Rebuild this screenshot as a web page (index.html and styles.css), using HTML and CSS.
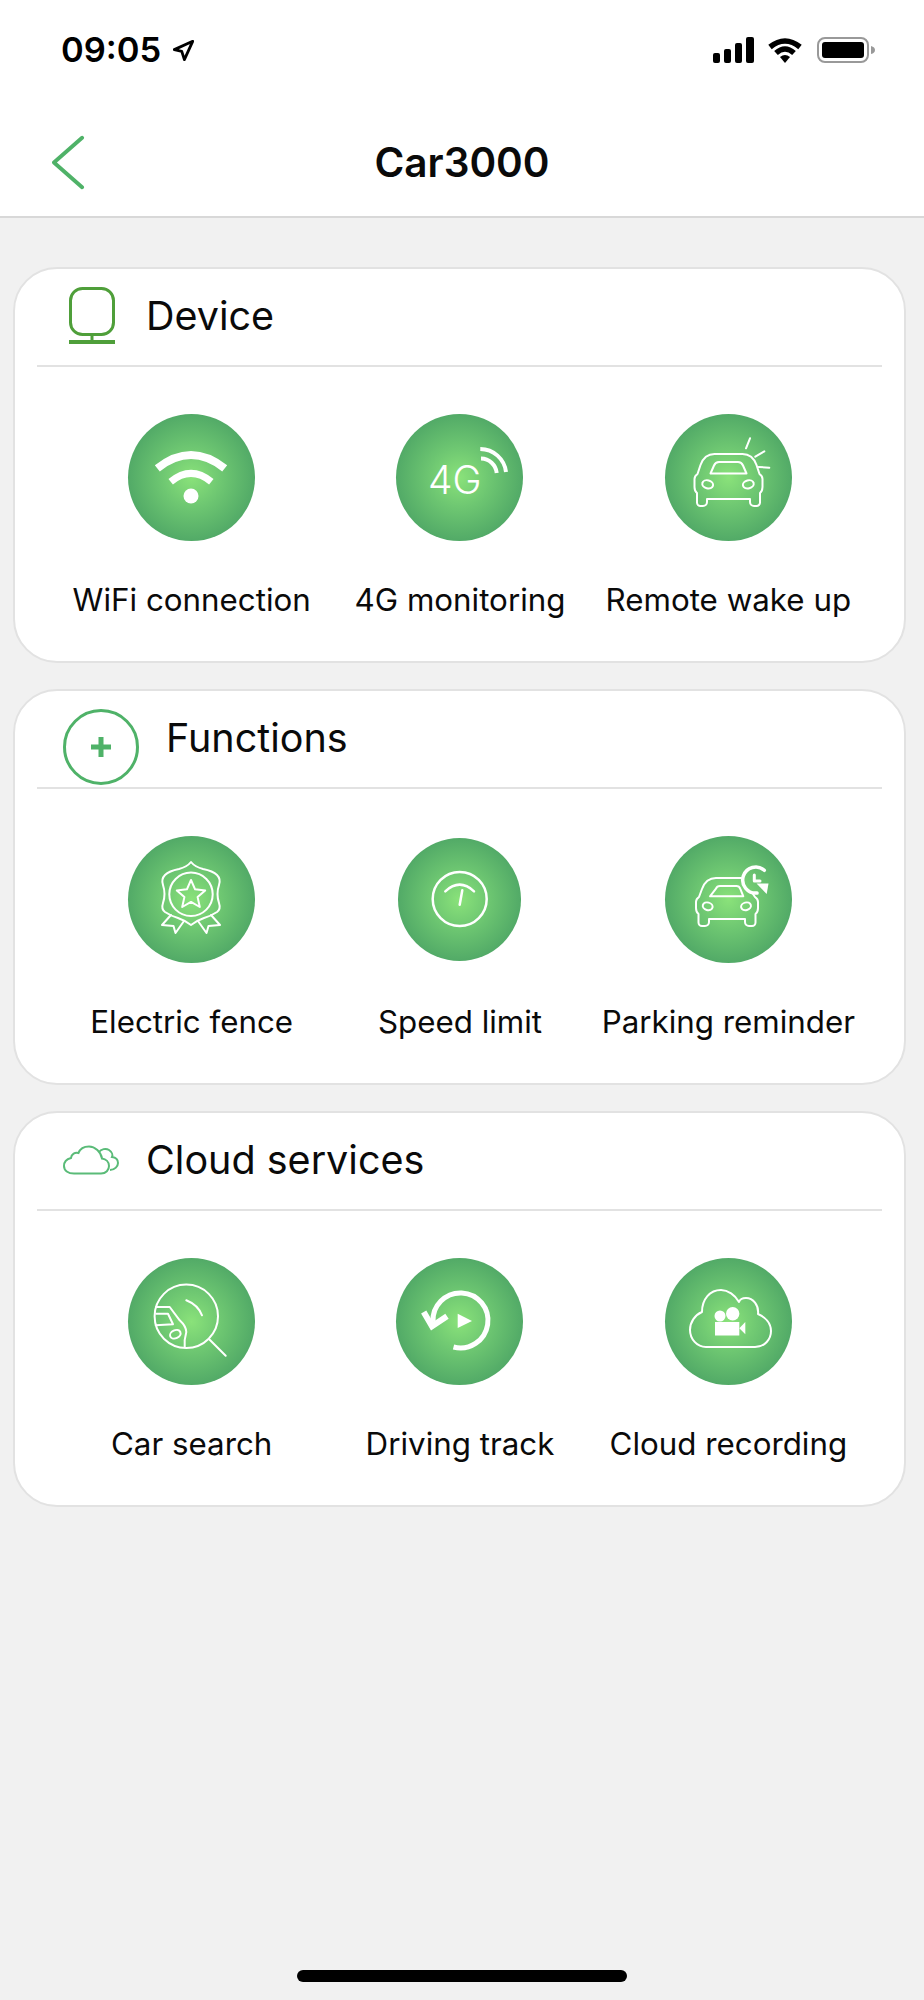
FILE: index.html
```html
<!DOCTYPE html>
<html lang="en">
<head>
<meta charset="utf-8">
<title>Car3000</title>
<link rel="stylesheet" href="styles.css">
</head>
<body>
<div class="page">
  <header class="top">
    <div class="status">
      <div class="status-left">
        <span class="time">09:05</span>
        <svg class="loc" viewBox="0 0 24 24"><path d="M22.5 1.5L1.5 11L10 13L13 22.5Z"/></svg>
      </div>
      <div class="status-right">
        <svg class="signal" viewBox="0 0 41 26"><rect x="0" y="16" width="7" height="10" rx="2"/><rect x="11" y="12" width="7" height="14" rx="2"/><rect x="22" y="6" width="7" height="20" rx="2"/><rect x="33" y="0" width="8" height="26" rx="2"/></svg>
        <svg class="wifi" viewBox="0 0 36 26"><path class="wifi-arc" d="M3 10Q18 -2 33 10"/><path class="wifi-arc" d="M9 16Q18 8 27 16"/><path class="wifi-dot" d="M13 20Q18 16 23 20L18 26Z"/></svg>
        <svg class="battery" viewBox="0 0 58 26"><rect class="batt-shell" x="1" y="1" width="50" height="24" rx="7"/><rect x="5" y="5" width="42" height="16" rx="3"/><path class="batt-nub" d="M54 9Q58 10 58 13Q58 16 54 17Z"/></svg>
      </div>
    </div>
    <nav class="nav">
      <svg class="back" viewBox="0 0 34 55"><path d="M31 2L2 27.5L31 53"/></svg>
      <h1 class="title">Car3000</h1>
    </nav>
  </header>

  <main class="cards">
    <section class="card">
      <div class="card-head head-device">
        <svg class="head-icon icon-device" viewBox="0 0 46 57"><rect x="1.5" y="1.5" width="43" height="46" rx="12"/><path d="M23 47.5V54"/><path class="device-base" d="M0 55H46"/></svg>
        <h2 class="card-title">Device</h2>
      </div>
      <div class="items">
        <div class="item">
          <div class="disc-slot"><div class="disc"><svg class="glyph" viewBox="0 0 127 127"><path class="g-8" d="M29.3 54.3Q63 27.7 96.7 54.3"/><path class="g-7" d="M42.7 67.7Q63 51 83.3 67.7"/><circle class="g-fill" cx="63" cy="82" r="7.5"/></svg></div></div>
          <p class="label">WiFi connection</p>
        </div>
        <div class="item">
          <div class="disc-slot"><div class="disc"><svg class="glyph" viewBox="0 0 127 127"><text class="g-text" x="32" y="80">4G</text><path class="g-4" d="M84.3 35A26 26 0 0 1 110 58"/><path class="g-4" d="M85 44.5A16 16 0 0 1 100.7 59"/></svg></div></div>
          <p class="label">4G monitoring</p>
        </div>
        <div class="item">
          <div class="disc-slot"><div class="disc"><svg class="glyph" viewBox="0 0 127 127">
            <path d="M42 85v3a4 4 0 0 1-4 4h-2.500a3.500 3.500 0 0 1-3.500-3.500v-9.500q-2.500-2-2.500-6v-8q0-3 3-5l3-9q4-11 14-11h28q10 0 14 11l3 9q3 2 3 5v8q0 4-2.500 6v9.500a3.500 3.500 0 0 1-3.500 3.500h-2.500a4 4 0 0 1-4-4v-3z"/>
            <path d="M45.500 59.500h36l-3.500-8q-1.500-3.500-5-3.500h-19q-3.500 0-5 3.500z"/>
            <ellipse cx="42.700" cy="70.300" rx="5.500" ry="4" transform="rotate(15 42.700 70.300)"/>
            <ellipse cx="83.300" cy="70.300" rx="5.500" ry="4" transform="rotate(-15 83.300 70.300)"/>
            <path d="M81 34.300L85 24.300M90.300 42.700L99.300 37.300M93.700 53L104.300 53.700"/>
          </svg></div></div>
          <p class="label">Remote wake up</p>
        </div>
      </div>
    </section>

    <section class="card">
      <div class="card-head head-functions">
        <svg class="head-icon icon-functions" viewBox="0 0 76 76"><circle cx="38" cy="38" r="36.500"/><path class="plus" d="M28 38H48M38 28V48"/></svg>
        <h2 class="card-title">Functions</h2>
      </div>
      <div class="items">
        <div class="item">
          <div class="disc-slot"><div class="disc"><svg class="glyph" viewBox="0 0 127 127">
            <path d="M63 26Q67 31 75 33Q85 35 89 39Q93 43 91 49Q88 58 91 67Q93 73 89 76Q83 80 76 82Q70 84 63 89Q56 84 50 82Q43 80 37 76Q33 73 35 67Q38 58 35 49Q33 43 37 39Q41 35 51 33Q59 31 63 26Z"/>
            <circle cx="63" cy="58.300" r="21.700"/>
            <path d="M63 44L67.100 53.300L77.200 54.400L69.600 61.100L71.800 71L63 65.900L54.200 71L56.400 61.100L48.800 54.400L58.900 53.300Z"/>
            <path d="M43 79L34 89L45.500 90L47.500 97L56 85M83 79L92 89L80.500 90L78.500 97L70 85"/>
          </svg></div></div>
          <p class="label">Electric fence</p>
        </div>
        <div class="item">
          <div class="disc-slot"><div class="disc disc-small"><svg class="glyph" viewBox="0 0 123 123">
            <circle class="g-25" cx="61.700" cy="61" r="27"/>
            <path class="g-25" d="M47.300 53.300Q61.700 40 76 53.300"/>
            <path class="g-25" d="M64.300 52.300L61.700 66.700"/>
          </svg></div></div>
          <p class="label">Speed limit</p>
        </div>
        <div class="item">
          <div class="disc-slot"><div class="disc"><svg class="glyph" viewBox="0 0 127 127">
            <path d="M76 42H51q-10 0-14 11l-3 8q-3 2-3 5v6q0 4 2.500 6v8.500a3.500 3.500 0 0 0 3.500 3.500h3a4 4 0 0 0 4-4v-3H80v3a4 4 0 0 0 4 4h3a3.500 3.500 0 0 0 3.500-3.500V78q2.500-2 2.500-6v-6q0-3-3-5l-2-3"/>
            <path d="M45 60.300H78.300l-3-7.500q-1-2.800-4-2.800H55q-3 0-4.200 2.800z"/>
            <ellipse cx="42.700" cy="70.300" rx="5" ry="3.800" transform="rotate(15 42.700 70.300)"/>
            <ellipse cx="81" cy="70.300" rx="5" ry="3.800" transform="rotate(-15 81 70.300)"/>
            <path class="g-35" d="M99.300 34.300A13 13 0 1 0 92 57"/>
            <path class="g-3" d="M89.300 39V45H95"/>
            <path class="g-solid" d="M91.500 47.500L103.500 47.500L101.700 58Z"/>
          </svg></div></div>
          <p class="label">Parking reminder</p>
        </div>
      </div>
    </section>

    <section class="card">
      <div class="card-head head-cloud">
        <svg class="head-icon icon-cloud" viewBox="0 0 56 30"><path d="M11 28.500H38C43 28.500 46 25 46 21C46 17 43 14 39 13.500C38 7 32 1.500 26 1.500C21 1.500 17 4 15.500 8C12 7 8.500 9 8 13C4 14 1 17 1 21C1 25.500 5 28.500 11 28.500Z"/><path d="M36 7C38 4 43 3 46 5C49 7 50 10 49 12C53 12.500 55 15 55 18C55 21 52 25 47 25"/></svg>
        <h2 class="card-title">Cloud services</h2>
      </div>
      <div class="items">
        <div class="item">
          <div class="disc-slot"><div class="disc"><svg class="glyph" viewBox="0 0 127 127">
            <circle cx="58.300" cy="58.300" r="31.700"/>
            <path d="M81.700 81.700L97.700 97.700M58.300 42.300Q70 47 74 57.300"/>
            <path d="M28 49H41.700L51.700 62.300Q58 68 58.300 74Q56 82 56.700 89"/>
            <path d="M28.300 55.700H40L45 66.300L27.700 67.300"/>
            <ellipse cx="47.300" cy="76.300" rx="5.500" ry="4" transform="rotate(-25 47.300 76.300)"/>
          </svg></div></div>
          <p class="label">Car search</p>
        </div>
        <div class="item">
          <div class="disc-slot"><div class="disc"><svg class="glyph" viewBox="0 0 127 127">
            <path class="g-5" d="M57.500 89A27.500 27.500 0 1 0 37 64"/>
            <path class="g-6" d="M27.700 54L36 68.300L51 58.300"/>
            <path class="g-solid" d="M61.700 55.700L76 63L61.700 70Z"/>
          </svg></div></div>
          <p class="label">Driving track</p>
        </div>
        <div class="item">
          <div class="disc-slot"><div class="disc"><svg class="glyph" viewBox="0 0 127 127">
            <path d="M41 89H90C100 89 106 81 106 73C106 65 100 59 93 56C94 47 88 40 81 40C77 40 75 41 74 44C70 37 63 32 56 32C45 32 37 41 37 54C30 57 25 64 25 72C25 81 32 89 41 89Z"/>
            <rect class="g-solid" x="50" y="64" width="24.300" height="13.500"/>
            <path class="g-solid" d="M74.300 70.300L80.300 64V76.300Z"/>
            <circle class="g-solid" cx="55" cy="58" r="5.500"/>
            <circle class="g-solid" cx="67.700" cy="55.700" r="6.700"/>
          </svg></div></div>
          <p class="label">Cloud recording</p>
        </div>
      </div>
    </section>
  </main>

  <div class="home-bar"></div>
</div>
</body>
</html>
```
FILE: styles.css
```css
* {
  box-sizing: border-box;
}

html,
body {
  margin: 0;
  padding: 0;
}

body {
  background: #f1f1f1;
  color: #0a0a0a;
  font-family: Inter, "Liberation Sans", sans-serif;
}

.page {
  display: flex;
  flex-direction: column;
  height: 2000px;
}

.top {
  background: #fff;
  border-bottom: 2px solid #d8d8d8;
  height: 218px;
}

.status {
  display: flex;
  align-items: center;
  justify-content: space-between;
  height: 100px;
  padding: 0 49px 0 61px;
}

.status-left,
.status-right {
  display: flex;
  align-items: center;
}

.time {
  color: #000;
  font-size: 34.500px;
  font-weight: 600;
  line-height: 40px;
}

.loc {
  width: 21px;
  height: 21px;
  margin-left: 12px;
  fill: none;
  stroke: #000;
  stroke-width: 3.200;
  stroke-linejoin: round;
}

.signal {
  width: 41px;
  height: 26px;
  fill: #000;
}

.wifi {
  width: 36px;
  height: 26px;
  margin-left: 13px;
}

.wifi-arc {
  fill: none;
  stroke: #000;
  stroke-width: 5.500;
}

.wifi-dot {
  fill: #000;
}

.battery {
  width: 58px;
  height: 26px;
  margin-left: 14px;
  fill: #000;
}

.batt-shell {
  fill: none;
  stroke: #999;
  stroke-width: 2;
}

.batt-nub {
  fill: #999;
}

.nav {
  position: relative;
  display: flex;
  align-items: center;
  justify-content: center;
  height: 116px;
  padding-top: 10px;
}

.back {
  position: absolute;
  left: 52px;
  top: 35px;
  width: 33px;
  height: 55px;
  fill: none;
  stroke: #4fb268;
  stroke-width: 4;
  stroke-linecap: round;
  stroke-linejoin: round;
}

.title {
  margin: 0;
  color: #0a0a0a;
  font-size: 40.500px;
  font-weight: 600;
  line-height: 50px;
}

.cards {
  display: flex;
  flex: 1;
  flex-direction: column;
  gap: 26px;
  padding: 49px 18px 0 13px;
}

.card {
  background: #fff;
  border: 2px solid #e2e2e2;
  border-radius: 44px;
  height: 396px;
}

.card-head {
  display: flex;
  align-items: center;
  height: 98px;
  margin: 0 22px;
  padding-bottom: 3px;
  border-bottom: 2px solid #e2e2e2;
}

.card-title {
  margin: 0;
  color: #0a0a0a;
  font-size: 39.500px;
  font-weight: 400;
  line-height: 46px;
}

.head-icon {
  flex: none;
  fill: none;
}

.head-device {
  padding-left: 32px;
}

.head-functions,
.head-cloud {
  padding-left: 26px;
}

.icon-device {
  width: 46px;
  height: 57px;
  margin-right: 31px;
  stroke: #4f9f3a;
  stroke-width: 3;
}

.device-base {
  stroke-width: 4;
}

.icon-functions {
  width: 76px;
  height: 76px;
  margin: 18px 27px 0 0;
  stroke: #4fb268;
  stroke-width: 3;
}

.plus {
  stroke-width: 5;
}

.icon-cloud {
  width: 56px;
  height: 30px;
  margin-right: 27px;
  stroke: #5abb78;
  stroke-width: 2;
}

.items {
  display: grid;
  grid-template-columns: repeat(3, 1fr);
  margin: 0 41.500px 0 42.500px;
  padding-top: 47px;
}

.item {
  display: flex;
  flex-direction: column;
  align-items: center;
}

.disc-slot {
  display: flex;
  align-items: center;
  justify-content: center;
  height: 127px;
}

.disc {
  width: 127px;
  height: 127px;
  border-radius: 50%;
  background: radial-gradient(circle closest-side, #8ae27a 0%, #6fc872 45%, #52aa67 100%);
}

.disc-small {
  width: 123px;
  height: 123px;
}

.glyph {
  display: block;
  width: 100%;
  height: 100%;
  fill: none;
  stroke: #fff;
  stroke-width: 2;
  stroke-linecap: round;
  stroke-linejoin: round;
}

.g-25 {
  stroke-width: 2.500;
}

.g-3 {
  stroke-width: 3;
}

.g-35 {
  stroke-width: 3.500;
}

.g-4 {
  stroke-width: 4;
  stroke-linecap: butt;
}

.g-5 {
  stroke-width: 5;
  stroke-linecap: butt;
}

.g-6 {
  stroke-width: 6;
  stroke-linecap: butt;
  stroke-linejoin: miter;
}

.g-7 {
  stroke-width: 7;
  stroke-linecap: butt;
}

.g-8 {
  stroke-width: 8;
  stroke-linecap: butt;
}

.g-fill,
.g-solid {
  fill: #fff;
  stroke: none;
}

.g-text {
  fill: #fff;
  stroke: none;
  font-family: Inter, "Liberation Sans", sans-serif;
  font-size: 39px;
  font-weight: 300;
}

.label {
  margin: 40px 0 0;
  color: #0a0a0a;
  font-size: 31.300px;
  line-height: 38px;
  text-align: center;
  white-space: nowrap;
}

.home-bar {
  flex: none;
  align-self: center;
  width: 330px;
  height: 12px;
  margin-bottom: 18px;
  border-radius: 6px;
  background: #000;
}
```
